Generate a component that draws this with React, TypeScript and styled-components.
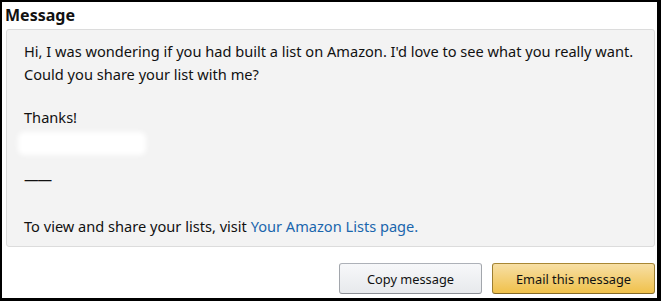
import React from "react";
import styled, { createGlobalStyle } from "styled-components";

const Global = createGlobalStyle`
  html, body { margin: 0; padding: 0; background: #fff; }
  body { font-family: "Noto Sans", "Open Sans", Arial, sans-serif; }
`;

const Frame = styled.div`
  box-sizing: border-box;
  width: 661px;
  height: 301px;
  border-style: solid;
  border-color: #000;
  border-width: 2px 4px 3px 2px;
  background: #fff;
  display: flex;
  flex-direction: column;
  padding: 0 2px 0 4px;
`;

const Heading = styled.h2`
  margin: 1px 0 0 -1px;
  height: 26px;
  font-size: 16px;
  font-weight: 700;
  color: #111;
  line-height: 24px;
`;

const Panel = styled.div`
  box-sizing: border-box;
  background: #f3f3f3;
  border: 1px solid #dcdcdc;
  border-radius: 3px;
  height: 218px;
  padding: 10px 17px 0 17px;
  color: #111;
  font-size: 14.6px;
  line-height: 23px;
`;

const Para = styled.p<{ $mt?: number }>`
  margin: ${(p) => p.$mt ?? 0}px 0 0 0;
`;

const Rule = styled(Para)`
  letter-spacing: -1px;
`;

const Redacted = styled.div`
  width: 128px;
  height: 23px;
  margin: 3px 0 0 -6px;
  background: #fff;
  border-radius: 6px;
  filter: blur(2.5px);
`;

const Link = styled.a`
  color: #1a66ad;
  text-decoration: none;
`;

const Actions = styled.div`
  display: flex;
  justify-content: flex-end;
  gap: 10px;
  margin-top: 16px;
`;

const Button = styled.button<{ $primary?: boolean }>`
  box-sizing: border-box;
  height: 31px;
  width: ${(p) => (p.$primary ? 163 : 143)}px;
  border-radius: 3px;
  border: 1px solid;
  border-color: ${(p) => (p.$primary ? "#a88734 #9c7e31 #846a29" : "#adb1b8 #a2a6ac #8d9096")};
  background: ${(p) =>
    p.$primary
      ? "linear-gradient(to bottom, #f7dfa5, #f0c14b)"
      : "linear-gradient(to bottom, #f7f8fa, #e7e9ec)"};
  font-family: "Noto Sans", "Open Sans", Arial, sans-serif;
  font-size: 12.8px;
  color: #111;
  padding: 0;
  cursor: pointer;
`;

export default function App() {
  return (
    <>
      <Global />
      <Frame>
        <Heading>Message</Heading>
        <Panel>
          <Para>
            Hi, I was wondering if you had built a list on Amazon. I'd love to see what you really want.
            <br />
            Could you share your list with me?
          </Para>
          <Para $mt={20}>Thanks!</Para>
          <Redacted />
          <Rule $mt={13}>——</Rule>
          <Para $mt={24}>
            To view and share your lists, visit <Link href="#">Your Amazon Lists page.</Link>
          </Para>
        </Panel>
        <Actions>
          <Button>Copy message</Button>
          <Button $primary>Email this message</Button>
        </Actions>
      </Frame>
    </>
  );
}
